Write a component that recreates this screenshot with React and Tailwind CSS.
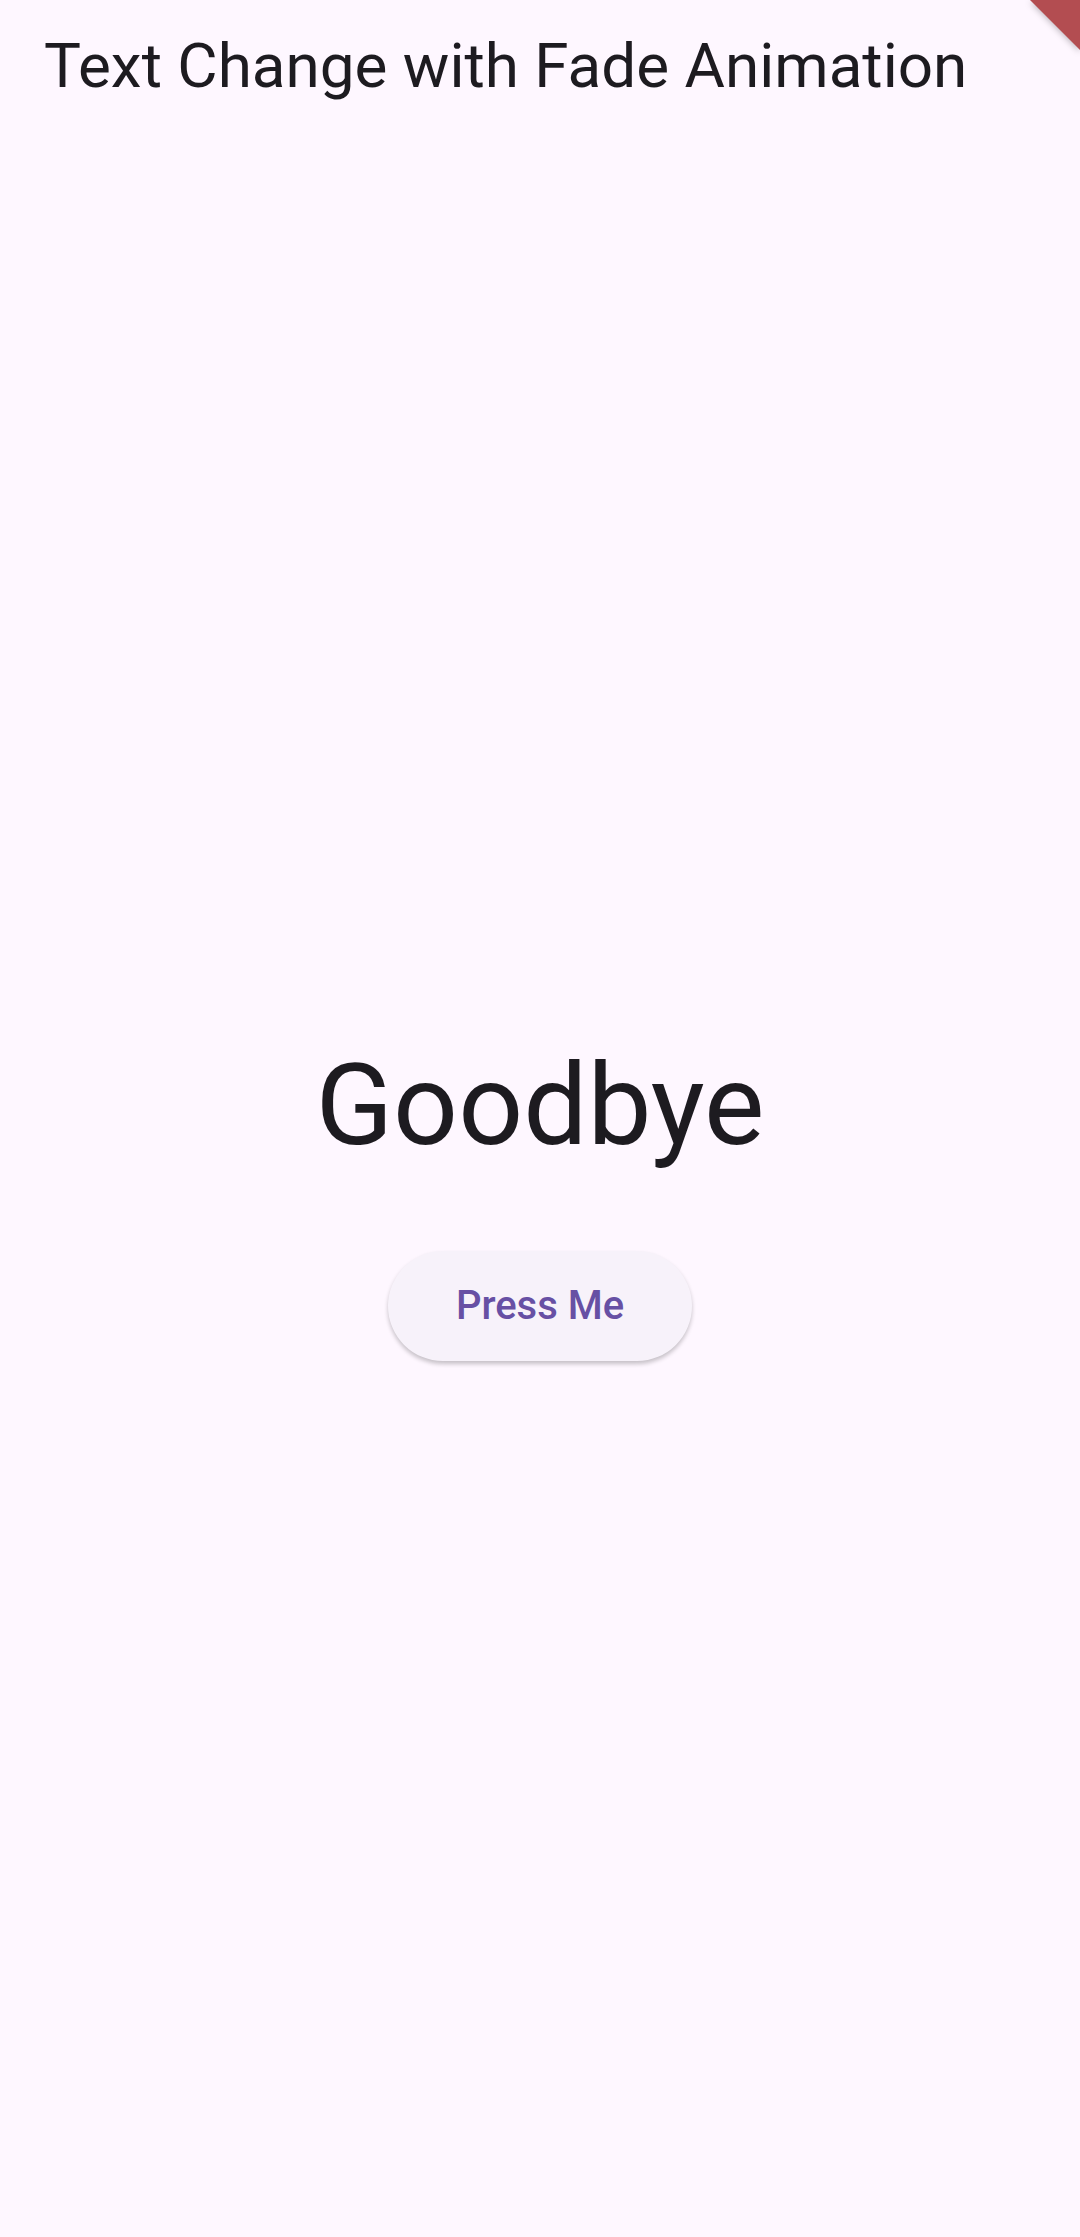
import React from "react";

const App = () => {
  return (
    <div
      className="relative flex flex-col w-full h-[2237px] bg-[#fef7ff] overflow-hidden"
      style={{ fontFamily: "Roboto, 'Noto Sans', sans-serif" }}
    >
      {/* App bar */}
      <div className="flex items-start h-[147px] px-[44px] pt-[35px] shrink-0">
        <h1 className="text-[62px] leading-none text-[#1d1b20] font-normal">
          Text Change with Fade Animation
        </h1>
      </div>

      {/* Body */}
      <div className="flex-1 flex flex-col items-center justify-center pt-[16px]">
        <p className="text-[114px] leading-[1.17] text-[#1d1b20]">Goodbye</p>
        <button className="mt-[78px] h-[110px] px-[68px] rounded-full bg-[#f7f2fa] text-[#6750a4] text-[40px] font-medium shadow-[0_3px_4px_rgba(0,0,0,0.22)]">
          Press Me
        </button>
      </div>

      {/* Debug banner corner */}
      <svg
        className="absolute top-0 right-0 drop-shadow-[0_2px_3px_rgba(0,0,0,0.25)]"
        width="50"
        height="50"
        viewBox="0 0 50 50"
      >
        <polygon points="0,0 50,0 50,50" fill="#b34d51" />
      </svg>
    </div>
  );
};

export default App;
